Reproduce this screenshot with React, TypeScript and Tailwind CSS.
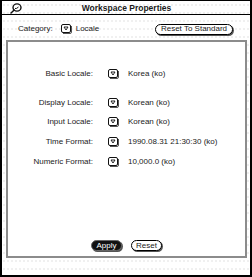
import React from "react";

function MenuGlyph() {
  return (
    <svg width="11" height="10" viewBox="0 0 11 10" className="block shrink-0">
      <rect x="0.5" y="0.5" width="9" height="8" rx="1.5" fill="white" stroke="#111" strokeWidth="1" />
      <path d="M2 9.5 H9 Q10.5 9.5 10.5 8 V2" fill="none" stroke="#555" strokeWidth="1" />
      <path d="M3 3 H7 L5 6 Z" fill="none" stroke="#111" strokeWidth="0.9" strokeLinejoin="round" />
    </svg>
  );
}

function PinIcon() {
  return (
    <svg width="12" height="11" viewBox="0 0 12 11" className="block">
      <ellipse cx="7" cy="4.5" rx="4" ry="3.6" fill="white" stroke="#111" strokeWidth="1.4" />
      <path d="M5 5.5 Q6.5 6 8.5 4" fill="none" stroke="#111" strokeWidth="1" />
      <path d="M4.2 7 L1 10" stroke="#111" strokeWidth="1.5" strokeLinecap="round" />
    </svg>
  );
}

const rows: { label: string; value: string; h: string }[] = [
  { label: "Basic Locale:", value: "Korea (ko)", h: "h-[20px] mb-[9px]" },
  { label: "Display Locale:", value: "Korean (ko)", h: "h-[19px]" },
  { label: "Input Locale:", value: "Korean (ko)", h: "h-[20px]" },
  { label: "Time Format:", value: "1990.08.31 21:30:30 (ko)", h: "h-[20px]" },
  { label: "Numeric Format:", value: "10,000.0 (ko)", h: "h-[20px]" },
];

export default function App() {
  return (
    <div className="w-[252px] h-[277px] bg-white border-x-2 border-t border-b-2 border-black flex flex-col font-['Liberation_Sans',Arial,sans-serif] text-[8px] leading-none text-[#1a1a1a] bg-[radial-gradient(circle,#dedede_0.6px,transparent_0.8px)] bg-[length:4px_8px] overflow-hidden">
      <div className="relative h-[14px] shrink-0 border-b border-black flex items-center justify-center pt-[2px]">
        <div className="absolute left-[8px] top-[2px]">
          <PinIcon />
        </div>
        <span className="font-bold text-[8.5px] ml-[1px]">Workspace Properties</span>
      </div>
      <div className="h-[25px] shrink-0 flex items-center pl-[16px] pr-[17px] pt-[3px]">
        <span>Category:</span>
        <span className="ml-[8px]">
          <MenuGlyph />
        </span>
        <span className="ml-[4px]">Locale</span>
        <div className="flex-1" />
        <div className="h-[11px] w-[78px] rounded-full border border-black shadow-[1px_1px_0_#555] bg-white flex items-center justify-center">
          Reset To Standard
        </div>
      </div>
      <div className="h-[218px] shrink-0 ml-[4px] mr-[3px] border-2 border-[#8c8c8c] bg-white flex flex-col pt-[22px] pb-[5px]">
        {rows.map((r) => (
          <div key={r.label} className={`${r.h} flex items-center`}>
            <span className="w-[85px] text-right shrink-0">{r.label}</span>
            <span className="ml-[15px]">
              <MenuGlyph />
            </span>
            <span className="ml-[9px]">{r.value}</span>
          </div>
        ))}
        <div className="mt-auto flex justify-center gap-[9px]">
          <div className="h-[11px] w-[31px] rounded-full bg-[#111] text-white border border-[#666] shadow-[1px_1px_0_#555] flex items-center justify-center">
            Apply
          </div>
          <div className="h-[11px] w-[31px] rounded-full bg-white border border-black shadow-[1px_1px_0_#555] flex items-center justify-center">
            Reset
          </div>
        </div>
      </div>
    </div>
  );
}
